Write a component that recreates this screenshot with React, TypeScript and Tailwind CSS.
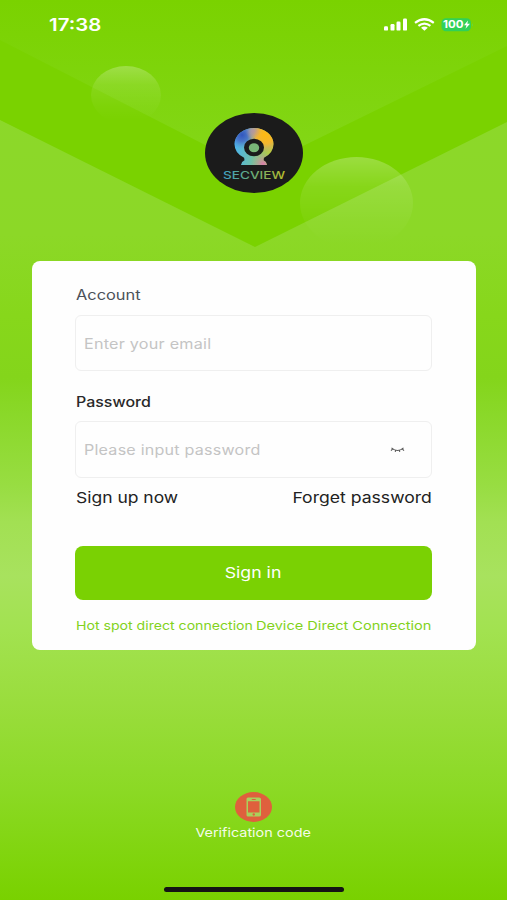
import type { ReactNode } from "react";

function Backdrop() {
  return (
    <svg className="absolute inset-0 h-full w-full" viewBox="0 0 507 900" aria-hidden="true">
      <defs>
        <linearGradient id="page" x1="0" y1="0" x2="0" y2="900" gradientUnits="userSpaceOnUse">
          <stop offset="0.12" stopColor="#8cd82a" />
          <stop offset="0.26" stopColor="#8cd827" />
          <stop offset="0.35" stopColor="#87d71b" />
          <stop offset="0.42" stopColor="#84d51b" />
          <stop offset="0.46" stopColor="#8ad829" />
          <stop offset="0.54" stopColor="#98dd42" />
          <stop offset="0.58" stopColor="#a2e053" />
          <stop offset="0.64" stopColor="#a8e25e" />
          <stop offset="0.7" stopColor="#a2e250" />
          <stop offset="0.78" stopColor="#9add3d" />
          <stop offset="0.88" stopColor="#8bd924" />
          <stop offset="0.96" stopColor="#7fd40b" />
          <stop offset="1" stopColor="#79d100" />
        </linearGradient>
        <linearGradient id="inner" x1="0" y1="0" x2="0" y2="170" gradientUnits="userSpaceOnUse">
          <stop offset="0" stopColor="#7ad200" />
          <stop offset="1" stopColor="#84d719" />
        </linearGradient>
        <linearGradient id="bubble" x1="0" y1="0" x2="0" y2="1">
          <stop offset="0" stopColor="#fff" stopOpacity="0.25" />
          <stop offset="0.32" stopColor="#fff" stopOpacity="0.1" />
          <stop offset="0.7" stopColor="#fff" stopOpacity="0.03" />
          <stop offset="0.95" stopColor="#fff" stopOpacity="0" />
        </linearGradient>
      </defs>
      <rect width="507" height="900" fill="url(#page)" />
      <path d="M0 0H507V122L255 247L0 120Z" fill="#7ad200" />
      <path d="M0 0H507V46L254 170L0 40Z" fill="url(#inner)" />
      <ellipse cx="126" cy="95" rx="35" ry="29" fill="url(#bubble)" />
      <ellipse cx="356.500" cy="203" rx="56.500" ry="46" fill="url(#bubble)" />
    </svg>
  );
}

function StatusIcons() {
  return (
    <svg width="92" height="16" viewBox="0 0 92 16" aria-hidden="true">
      <g fill="#fff">
        <rect x="1" y="9.300" width="4" height="4.300" rx="1.200" />
        <rect x="7.500" y="7.100" width="4" height="6.500" rx="1.200" />
        <rect x="13.500" y="4.500" width="4" height="9.100" rx="1.200" />
        <rect x="20" y="1.600" width="4" height="12" rx="1.200" />
      </g>
      <g fill="none" stroke="#fff" strokeWidth="2.200">
        <path d="M32 5.800Q41.400 -1.300 50.800 5.800" />
        <path d="M35.400 8.900Q41.400 4.200 47.400 8.900" />
      </g>
      <path d="M38 10.800Q41.400 8.200 44.800 10.800L41.400 13.700Z" fill="#fff" />
      <rect x="58.500" y="1.300" width="29.500" height="13" rx="4.500" fill="#30d158" />
      <path d="M89.300 5.900Q91 7.800 89.300 9.700Z" fill="#5bdc55" />
      <text x="60" y="11.300" textLength="20.500" lengthAdjust="spacingAndGlyphs" fill="#fff" fontFamily="Inter, sans-serif" fontWeight="700" fontSize="10">100</text>
      <path d="M85 3.500L81 8.200H83.500L82.500 11.700L87 6.800H84.300Z" fill="#fff" />
    </svg>
  );
}

function Logo() {
  return (
    <svg width="98" height="80" viewBox="0 0 98 80" role="img" aria-label="SECVIEW">
      <defs>
        <linearGradient id="word" x1="18" x2="80" y1="0" y2="0" gradientUnits="userSpaceOnUse">
          <stop offset="0" stopColor="#3f9fc4" />
          <stop offset="0.45" stopColor="#65ad7e" />
          <stop offset="1" stopColor="#b9bd29" />
        </linearGradient>
        <linearGradient id="cam" x1="29" y1="30" x2="69" y2="34" gradientUnits="userSpaceOnUse">
          <stop offset="0" stopColor="#4ab4ef" />
          <stop offset="0.45" stopColor="#6dbfae" />
          <stop offset="0.75" stopColor="#9fc75b" />
          <stop offset="1" stopColor="#c4ce34" />
        </linearGradient>
        <radialGradient id="blue" cx="37" cy="22" r="14" gradientUnits="userSpaceOnUse">
          <stop offset="0" stopColor="#3156bd" />
          <stop offset="0.45" stopColor="#456ac6" stopOpacity="0.85" />
          <stop offset="1" stopColor="#4e8edd" stopOpacity="0" />
        </radialGradient>
        <radialGradient id="orange" cx="60" cy="22" r="18" gradientUnits="userSpaceOnUse">
          <stop offset="0" stopColor="#ffb911" />
          <stop offset="0.5" stopColor="#fbb42c" stopOpacity="0.9" />
          <stop offset="1" stopColor="#d59a85" stopOpacity="0" />
        </radialGradient>
        <radialGradient id="mauve" cx="48" cy="18" r="8" gradientUnits="userSpaceOnUse">
          <stop offset="0" stopColor="#b594a4" stopOpacity="0.9" />
          <stop offset="1" stopColor="#b594a4" stopOpacity="0" />
        </radialGradient>
        <radialGradient id="pink" cx="58" cy="51" r="12" gradientUnits="userSpaceOnUse">
          <stop offset="0" stopColor="#dc7bac" />
          <stop offset="1" stopColor="#aaa9b0" stopOpacity="0" />
        </radialGradient>
        <clipPath id="camera">
          <ellipse cx="49" cy="31" rx="19.500" ry="16" />
          <path d="M39 44H59L58.500 47.300Q61.500 48.500 62 52H36Q36.500 48.500 39.500 47.300Z" />
        </clipPath>
      </defs>
      <ellipse cx="49" cy="40" rx="49" ry="40" fill="#1b1b1b" />
      <g clipPath="url(#camera)">
        <rect x="28" y="14" width="42" height="39" fill="url(#cam)" />
        <rect x="28" y="14" width="42" height="39" fill="url(#blue)" />
        <rect x="28" y="14" width="42" height="39" fill="url(#orange)" />
        <rect x="28" y="14" width="42" height="39" fill="url(#mauve)" />
        <rect x="28" y="14" width="42" height="39" fill="url(#pink)" />
      </g>
      <ellipse cx="49" cy="34.500" rx="10" ry="8.700" fill="#1b1b1b" />
      <ellipse cx="49" cy="34.700" rx="5.200" ry="4.500" fill="#79b777" />
      <text x="18" y="65.700" textLength="62" lengthAdjust="spacingAndGlyphs" fill="url(#word)" fontFamily="Inter, sans-serif" fontWeight="500" fontSize="10.500">SECVIEW</text>
    </svg>
  );
}

interface FieldProps {
  label: string;
  labelClass: string;
  hint: string;
  hintClass: string;
  boxClass: string;
  children?: ReactNode;
}

function Field({ label, labelClass, hint, hintClass, boxClass, children }: FieldProps) {
  return (
    <div>
      <div className="flex h-5 items-center pl-px">
        <span className={`origin-left whitespace-nowrap text-sm ${labelClass}`}>{label}</span>
      </div>
      <div className={`flex items-center justify-between rounded-md border border-[#efefef] pr-[26px] pl-2 ${boxClass}`}>
        <span className={`origin-left whitespace-nowrap pt-px text-sm tracking-[0.2px] text-[#c4c4c4] ${hintClass}`}>{hint}</span>
        {children}
      </div>
    </div>
  );
}

function ClosedEye() {
  return (
    <svg width="15" height="8" viewBox="0 0 15 8" fill="none" stroke="#555" strokeWidth="1.100" aria-hidden="true">
      <path d="M1.500 1.800Q7.500 7.200 13.500 1.800M2.800 2.800L1 4.600M5.700 4.300L5.200 5.800M9.300 4.300L9.800 5.800M12.200 2.800L14 4.600" />
    </svg>
  );
}

export default function App() {
  return (
    <main className="relative h-[900px] w-[507px] overflow-hidden font-['Inter',sans-serif]">
      <Backdrop />
      <div className="relative flex h-full flex-col items-center">
        <header className="flex h-[49px] w-full shrink-0 items-center justify-between pt-px pr-[32px] pl-[49px]">
          <span className="origin-left scale-x-[1.2] pt-px text-[17px] font-semibold text-white">17:38</span>
          <StatusIcons />
        </header>
        <div className="mt-16 h-20">
          <Logo />
        </div>
        <section className="mt-[68px] ml-[1px] h-[389px] w-[444px] shrink-0 rounded-lg bg-[#fefefe] pt-6 pr-[44px] pl-[43px]">
          <Field label="Account" labelClass="text-[#4b5159] scale-x-[1.17]" hint="Enter your email" hintClass="scale-x-[1.155]" boxClass="mt-[10px] h-14" />
          <div className="mt-[21px]">
            <Field label="Password" labelClass="text-[#292929] scale-x-[1.14] font-medium" hint="Please input password" hintClass="scale-x-[1.148]" boxClass="mt-[9px] h-[57px]">
              <ClosedEye />
            </Field>
          </div>
          <div className="mt-[10px] flex h-5 items-center justify-between pl-px text-[15px] text-[#222]">
            <span className="origin-left scale-x-[1.165] whitespace-nowrap">Sign up now</span>
            <span className="origin-right scale-x-[1.173] whitespace-nowrap">Forget password</span>
          </div>
          <button className="mt-[38px] flex h-[54px] w-full items-center justify-center rounded-lg bg-[#7ad103] pt-px text-[15px] text-white">
            <span className="scale-x-[1.18] whitespace-nowrap">Sign in</span>
          </button>
          <div className="mt-4 flex h-5 items-center justify-between pr-px pl-px text-xs text-[#82d21c]">
            <span className="origin-left scale-x-[1.175] whitespace-nowrap">Hot spot direct connection</span>
            <span className="origin-right scale-x-[1.215] whitespace-nowrap">Device Direct Connection</span>
          </div>
        </section>
        <footer className="mt-[142px] flex flex-col items-center">
          <svg width="37" height="30" viewBox="0 0 37 30" aria-hidden="true">
            <ellipse cx="18.500" cy="15" rx="18.500" ry="15" fill="#df603d" />
            <path fillRule="evenodd" d="M13 5.500H24Q26 5.500 26 7V23Q26 24.500 24 24.500H13Q11.500 24.500 11.500 23V7Q11.500 5.500 13 5.500ZM13 9.200V20.500H24.500V9.200ZM16.800 6.900V7.900H20.700V6.900ZM17.500 22.500A1.200 1.100 0 1 0 20 22.500A1.200 1.100 0 1 0 17.500 22.500Z" fill="#a9d05c" />
          </svg>
          <span className="scale-x-[1.2] pt-px text-xs leading-5 whitespace-nowrap text-[#f4fce9]">Verification code</span>
        </footer>
        <div className="mt-[44px] h-[5px] w-[180px] rounded-full bg-[#141414]" />
      </div>
    </main>
  );
}
